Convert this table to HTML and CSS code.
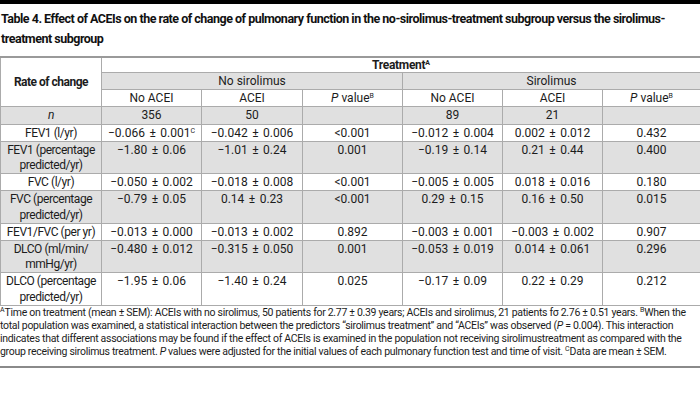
FILE: index.html
```html
<!DOCTYPE html>
<html>
<head>
<meta charset="utf-8">
<link rel="stylesheet" href="styles.css">
</head>
<body>
<div class="topbar"></div>
<h1 class="title">Table 4. Effect of ACEIs on the rate of change of pulmonary function in the no-sirolimus-treatment subgroup versus the sirolimus-<br>treatment subgroup</h1>
<table class="data">
<colgroup>
<col class="c1"><col class="c2"><col class="c3"><col class="c4"><col class="c5"><col class="c6"><col class="c7">
</colgroup>
<thead>
<tr class="r-treat"><th rowspan="3" class="rate">Rate of change</th><th colspan="6" class="treat">Treatment<sup>A</sup></th></tr>
<tr class="gray"><th colspan="3">No sirolimus</th><th colspan="3">Sirolimus</th></tr>
<tr class="r-sub"><th>No ACEI</th><th>ACEI</th><th><i>P</i> value<sup>B</sup></th><th>No ACEI</th><th>ACEI</th><th><i>P</i> value<sup>B</sup></th></tr>
</thead>
<tbody>
<tr class="gray"><td class="lab"><i>n</i></td><td>356</td><td>50</td><td></td><td>89</td><td>21</td><td></td></tr>
<tr><td class="lab">FEV1 (l/yr)</td><td>−0.066 ± 0.001<sup>C</sup></td><td>−0.042 ± 0.006</td><td>&lt;0.001</td><td>−0.012 ± 0.004</td><td>0.002 ± 0.012</td><td>0.432</td></tr>
<tr class="gray"><td class="lab">FEV1 (percentage<br>predicted/yr)</td><td>−1.80 ± 0.06</td><td>−1.01 ± 0.24</td><td>0.001</td><td>−0.19 ± 0.14</td><td>0.21 ± 0.44</td><td>0.400</td></tr>
<tr><td class="lab">FVC (l/yr)</td><td>−0.050 ± 0.002</td><td>−0.018 ± 0.008</td><td>&lt;0.001</td><td>−0.005 ± 0.005</td><td>0.018 ± 0.016</td><td>0.180</td></tr>
<tr class="gray"><td class="lab">FVC (percentage<br>predicted/yr)</td><td>−0.79 ± 0.05</td><td>0.14 ± 0.23</td><td>&lt;0.001</td><td>0.29 ± 0.15</td><td>0.16 ± 0.50</td><td>0.015</td></tr>
<tr><td class="lab">FEV1/FVC (per yr)</td><td>−0.013 ± 0.000</td><td>−0.013 ± 0.002</td><td>0.892</td><td>−0.003 ± 0.001</td><td>−0.003 ± 0.002</td><td>0.907</td></tr>
<tr class="gray"><td class="lab">DLCO (ml/min/<br>mmHg/yr)</td><td>−0.480 ± 0.012</td><td>−0.315 ± 0.050</td><td>0.001</td><td>−0.053 ± 0.019</td><td>0.014 ± 0.061</td><td>0.296</td></tr>
<tr><td class="lab">DLCO (percentage<br>predicted/yr)</td><td>−1.95 ± 0.06</td><td>−1.40 ± 0.24</td><td>0.025</td><td>−0.17 ± 0.09</td><td>0.22 ± 0.29</td><td>0.212</td></tr>
</tbody>
</table>
<p class="notes"><sup>A</sup>Time on treatment (mean ± SEM): ACEIs with no sirolimus, 50 patients for 2.77 ± 0.39 years; ACEIs and sirolimus, 21 patients fσ 2.76 ± 0.51 years. <sup>B</sup>When the<br>total population was examined, a statistical interaction between the predictors “sirolimus treatment” and “ACEIs” was observed (<i>P</i> = 0.004). This interaction<br>indicates that different associations may be found if the effect of ACEIs is examined in the population not receiving sirolimustreatment as compared with the<br>group receiving sirolimus treatment. <i>P</i> values were adjusted for the initial values of each pulmonary function test and time of visit. <sup>C</sup>Data are mean ± SEM.</p>
</body>
</html>
```

FILE: styles.css
```css
html, body {
  margin: 0;
  padding: 0;
  background: #fff;
}
body {
  width: 700px;
  font-family: "Roboto", "Liberation Sans", sans-serif;
  color: #1c1c1c;
}
.topbar {
  height: 4px;
  background: #000;
}
.title {
  margin: 5px 0 7px 1px;
  font-size: 12.5px;
  line-height: 20px;
  font-weight: bold;
  letter-spacing: -0.5px;
  color: #111;
  white-space: nowrap;
}
.data {
  width: 700px;
  border-collapse: collapse;
  table-layout: fixed;
  font-size: 12px;
  border-top: 2px solid #9a9a9a;
}
.c1 { width: 101px; }
.c2 { width: 100px; }
.c3 { width: 101px; }
.c4 { width: 100px; }
.c5 { width: 100px; }
.c6 { width: 100px; }
.c7 { width: 98px; }
.data th, .data td {
  border: 1px solid #ababab;
  padding: 1px 2px 0;
  line-height: 15.2px;
  text-align: center;
  vertical-align: top;
  font-weight: normal;
  white-space: nowrap;
}
.data td {
  word-spacing: 1.5px;
}
.data td.lab {
  word-spacing: 0;
  letter-spacing: -0.45px;
}
.data .rate {
  font-weight: bold;
  vertical-align: middle;
  letter-spacing: -0.5px;
}
.data .treat {
  font-weight: bold;
  line-height: 13px;
  letter-spacing: -0.3px;
}
.gray th, .gray td {
  background: #e0e0e0;
}
sup {
  font-size: 7px;
  line-height: 0;
  vertical-align: 4px;
  letter-spacing: 0;
}
.notes {
  margin: 0;
  padding: 0 0 8px 0;
  font-size: 10.5px;
  line-height: 13px;
  letter-spacing: -0.3px;
  border-bottom: 2px solid #8a8a8a;
  white-space: nowrap;
}
```
